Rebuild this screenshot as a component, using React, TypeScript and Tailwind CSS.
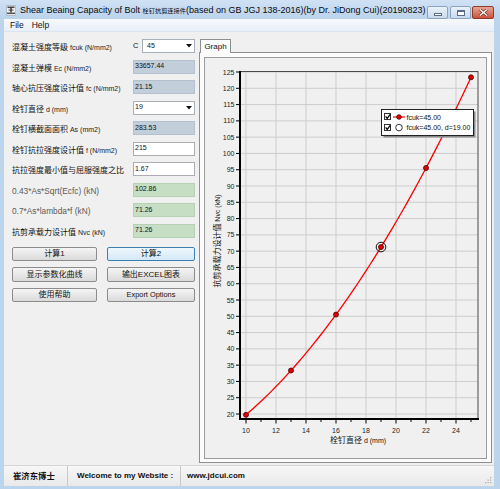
import React from "react";

const N = (d: number) => (0.7 * Math.PI * d * d / 4 * 1.67 * 215) / 1000;
const X = (d: number) => 246 + (d - 10) * 15;
const Y = (v: number) => 414 - (v - 20) * 3.257;
const FF = "'Liberation Sans','Noto Sans CJK SC',sans-serif";

function Chart() {
  const curve: string[] = [];
  for (let i = 0; i <= 60; i++) {
    const d = 10 + i * 0.25;
    curve.push(`${X(d).toFixed(2)},${Y(N(d)).toFixed(2)}`);
  }
  const yVals: number[] = [];
  for (let v = 20; v <= 125; v += 5) yVals.push(v);
  const xLabels = [10, 12, 14, 16, 18, 20, 22, 24];
  const xTicks: number[] = [];
  for (let d = 10; d <= 25; d++) xTicks.push(d);
  const marks = [10, 13, 16, 19, 22, 25];
  return (
    <svg width={281} height={400} viewBox="205 58 281 400" className="block" fontFamily={FF}>
      <rect x={205} y={58} width={281} height={400} fill="#f0f0f0" />
      {yVals.map((v) => (
        <line key={"gy" + v} x1={240} x2={478} y1={Y(v)} y2={Y(v)} stroke="#cdcdcd" strokeWidth={1} />
      ))}
      {xLabels.map((d) => (
        <line key={"gx" + d} x1={X(d)} x2={X(d)} y1={71} y2={419} stroke="#cdcdcd" strokeWidth={1} />
      ))}
      <rect x={240.5} y={71.5} width={237.5} height={347.5} fill="none" stroke="#4a4a4a" strokeWidth={1} />
      <line x1={240} x2={240} y1={71} y2={420} stroke="#000" strokeWidth={2} />
      <line x1={239} x2={479} y1={419} y2={419} stroke="#000" strokeWidth={2} />
      {yVals.map((v) => (
        <line key={"ty" + v} x1={236} x2={240} y1={Y(v)} y2={Y(v)} stroke="#000" strokeWidth={1} />
      ))}
      {xTicks.map((d) => (
        <line key={"tx" + d} x1={X(d)} x2={X(d)} y1={419} y2={d % 2 === 0 ? 423.5 : 422} stroke="#000" strokeWidth={1} />
      ))}
      {yVals.map((v) => (
        <text key={"ly" + v} x={234.5} y={Y(v) + 2.5} fontSize={7} textAnchor="end" fill="#222">
          {v}
        </text>
      ))}
      {xLabels.map((d) => (
        <text key={"lx" + d} x={X(d)} y={433} fontSize={7} textAnchor="middle" fill="#222">
          {d}
        </text>
      ))}
      <polyline points={curve.join(" ")} fill="none" stroke="#ff0000" strokeWidth={1.3} />
      {marks.map((d) => (
        <circle key={"m" + d} cx={X(d)} cy={Y(N(d))} r={2.5} fill="#e00000" stroke="#4a0000" strokeWidth={0.8} />
      ))}
      <circle cx={X(19)} cy={Y(N(19))} r={4.8} fill="none" stroke="#111" strokeWidth={1} />

      {/* legend */}
      <rect x={383.5} y={111.5} width={92} height={26} fill="#8a8a8a" />
      <rect x={381.5} y={109.5} width={92} height={26} fill="#fff" stroke="#222" strokeWidth={1} />
      <rect x={384.5} y={113.5} width={6} height={6} fill="#fff" stroke="#333" strokeWidth={1} />
      <polyline points="385.6,116.3 387.2,118.4 390.2,114.3" fill="none" stroke="#000" strokeWidth={1.2} />
      <line x1={393} x2={405} y1={117} y2={117} stroke="#ff0000" strokeWidth={1.2} />
      <circle cx={399} cy={117} r={2.3} fill="#e00000" stroke="#4a0000" strokeWidth={0.8} />
      <text x={406.5} y={119.6} fontSize={7} fill="#111">fcuk=45.00</text>
      <rect x={384.5} y={124.5} width={6} height={6} fill="#fff" stroke="#333" strokeWidth={1} />
      <polyline points="385.6,127.3 387.2,129.4 390.2,125.3" fill="none" stroke="#000" strokeWidth={1.2} />
      <circle cx={399} cy={127.6} r={3.3} fill="#fff" stroke="#222" strokeWidth={0.9} />
      <text x={406.5} y={130.2} fontSize={7} fill="#111">fcuk=45.00, d=19.00</text>

      {/* axis titles */}
      <text x={358} y={443} textAnchor="middle" fill="#111">
        <tspan fontSize={8}>栓钉直径</tspan>
        <tspan fontSize={7}> d (mm)</tspan>
      </text>
      <text transform="translate(219.5,241) rotate(-90)" textAnchor="middle" fill="#111">
        <tspan fontSize={8}>抗剪承载力设计值</tspan>
        <tspan fontSize={7}> Nvc (kN)</tspan>
      </text>
    </svg>
  );
}

function StudIcon() {
  return (
    <svg width={10} height={11} viewBox="0 0 10 11" className="mt-[5px] shrink-0">
      <rect x={0.5} y={0.5} width={9} height={10} fill="#f4f6f8" stroke="#9aa6b2" strokeWidth={0.6} />
      <rect x={1.5} y={1.5} width={7} height={1.6} fill="#444" />
      <rect x={4.2} y={3} width={1.6} height={4.5} fill="#444" />
      <rect x={2.5} y={4.6} width={5} height={1} fill="#444" />
      <rect x={1} y={7.5} width={8} height={1.6} fill="#555" />
    </svg>
  );
}

function Combo({ value, pad }: { value: string; pad: string }) {
  return (
    <div className={`h-[14px] w-full bg-white border border-[#a9afb8] flex items-center ${pad} text-[7px]`}>
      <span>{value}</span>
      <svg width={6} height={4} viewBox="0 0 6 4" className="ml-auto mr-[2px]">
        <polygon points="0,0 6,0 3,3.5" fill="#111" />
      </svg>
    </div>
  );
}

function Box({ value, tone }: { value: string; tone: "blue" | "white" | "green" }) {
  const cls =
    tone === "blue"
      ? "bg-[#c2cfdb] border-[#b4c2cf]"
      : tone === "green"
      ? "bg-[#c6dfc4] border-[#b6d0b4]"
      : "bg-white border-[#abadb3]";
  return (
    <div className={`h-[14px] w-full border ${cls} flex items-center pl-[1px] text-[7px] text-[#111]`}>
      {value}
    </div>
  );
}

function Lbl({ cn, en, gray }: { cn?: string; en?: string; gray?: boolean }) {
  return (
    <div className="w-[121px] shrink-0 whitespace-pre leading-[11px]">
      {cn ? <span className="text-[8px] text-[#111]">{cn}</span> : null}
      {en ? (
        <span className={gray ? "text-[8.3px] text-[#5a5a5a]" : "text-[7px] text-[#222]"}>{en}</span>
      ) : null}
    </div>
  );
}

function Btn({ children, active, wide }: { children: React.ReactNode; active?: boolean; wide?: boolean }) {
  return (
    <div
      className={`h-[14.5px] ${wide ? "w-[88px]" : "w-[85px]"} rounded-[2px] border flex items-center justify-center text-[8px] text-[#111] ${
        active
          ? "border-[#3c7fb1] bg-linear-to-b from-[#eef7fd] to-[#d3e9f7]"
          : "border-[#8c8c8c] bg-linear-to-b from-[#f5f5f5] to-[#dadada]"
      }`}
    >
      {children}
    </div>
  );
}

export default function App() {
  return (
    <div className="w-[500px] h-[489px] flex flex-col bg-[#bdd4ed] font-['Liberation_Sans','Noto_Sans_CJK_SC',sans-serif] text-[#111] overflow-hidden">
      {/* title bar */}
      <div className="h-[19px] shrink-0 flex items-start bg-linear-to-b from-[#d0e1f4] to-[#bbd3ec] pl-[6px] pr-[6px]">
        <StudIcon />
        <div className="ml-[4px] mt-[4px] text-[9px] leading-[12px] text-[#0a0a0a] whitespace-nowrap">
          Shear Beaing Capacity of Bolt <span className="text-[6.2px]">栓钉抗剪连接件</span>(based on GB JGJ 138-2016)(by Dr. JiDong Cui)(20190823)
        </div>
        <div className="ml-auto mt-[6px] flex items-start">
          <div className="w-[21px] h-[13px] rounded-[2px] border border-[#8aa2c0] bg-linear-to-b from-[#eaf1f9] to-[#c9d9ec] flex items-end justify-center pb-[2px]">
            <div className="w-[8px] h-[3px] bg-white border border-[#5a6c85]" />
          </div>
          <div className="ml-[2px] w-[21px] h-[13px] rounded-[2px] border border-[#8aa2c0] bg-linear-to-b from-[#eaf1f9] to-[#c9d9ec] flex items-center justify-center">
            <div className="w-[8px] h-[6px] bg-white border border-[#5a6c85] border-t-2" />
          </div>
          <div className="ml-[1px] w-[22px] h-[13px] rounded-[2px] border border-[#8e3b2c] bg-linear-to-b from-[#eaa391] to-[#c8513c] flex items-center justify-center">
            <svg width={9} height={7} viewBox="0 0 9 7">
              <path d="M1 0.5 L8 6.5 M8 0.5 L1 6.5" stroke="#5a1e14" strokeWidth={2.6} />
              <path d="M1 0.5 L8 6.5 M8 0.5 L1 6.5" stroke="#fff" strokeWidth={1.4} />
            </svg>
          </div>
        </div>
      </div>

      {/* window body */}
      <div className="flex-1 flex flex-col pl-[4px] pr-[6px] pb-[3px] min-h-0">
        {/* menu */}
        <div className="h-[13px] shrink-0 flex items-center bg-linear-to-b from-[#f6f9fd] to-[#e9eff8] border-b border-[#dbe4ef] text-[8.5px] text-[#111]">
          <span className="ml-[6px]">File</span>
          <span className="ml-[8px]">Help</span>
        </div>

        {/* client */}
        <div className="flex-1 flex bg-[#f0f0f0] min-h-0">
          {/* left panel */}
          <div className="w-[193px] shrink-0 pl-[8px] pt-[3.75px] flex flex-col">
            <div className="h-[20.5px] flex items-center">
              <Lbl cn="混凝土强度等级" en=" fcuk (N/mm2)" />
              <span className="w-[9px] text-[7.5px]">C</span>
              <div className="w-[53px]">
                <Combo value="45" pad="pl-[4px]" />
              </div>
            </div>
            <div className="h-[20.5px] flex items-center">
              <Lbl cn="混凝土弹模" en=" Ec (N/mm2)" />
              <div className="w-[62px]">
                <Box value="33657.44" tone="blue" />
              </div>
            </div>
            <div className="h-[20.5px] flex items-center">
              <Lbl cn="轴心抗压强度设计值" en=" fc (N/mm2)" />
              <div className="w-[62px]">
                <Box value="21.15" tone="blue" />
              </div>
            </div>
            <div className="h-[20.5px] flex items-center">
              <Lbl cn="栓钉直径" en=" d (mm)" />
              <div className="w-[62px]">
                <Combo value="19" pad="pl-[1px]" />
              </div>
            </div>
            <div className="h-[20.5px] flex items-center">
              <Lbl cn="栓钉横截面面积" en=" As (mm2)" />
              <div className="w-[62px]">
                <Box value="283.53" tone="blue" />
              </div>
            </div>
            <div className="h-[20.5px] flex items-center">
              <Lbl cn="栓钉抗拉强度设计值" en=" f (N/mm2)" />
              <div className="w-[62px]">
                <Box value="215" tone="white" />
              </div>
            </div>
            <div className="h-[20.5px] flex items-center">
              <Lbl cn="抗拉强度最小值与屈服强度之比" />
              <div className="w-[62px]">
                <Box value="1.67" tone="white" />
              </div>
            </div>
            <div className="h-[20.5px] flex items-center">
              <Lbl en="0.43*As*Sqrt(Ecfc) (kN)" gray />
              <div className="w-[62px]">
                <Box value="102.86" tone="green" />
              </div>
            </div>
            <div className="h-[20.5px] flex items-center">
              <Lbl en="0.7*As*lambda*f (kN)" gray />
              <div className="w-[62px]">
                <Box value="71.26" tone="green" />
              </div>
            </div>
            <div className="h-[20.5px] flex items-center">
              <Lbl cn="抗剪承载力设计值" en=" Nvc (kN)" />
              <div className="w-[62px]">
                <Box value="71.26" tone="green" />
              </div>
            </div>

            <div className="mt-[6px] flex flex-col gap-[6px]">
              <div className="flex gap-[10px]">
                <Btn>计算1</Btn>
                <Btn active wide>计算2</Btn>
              </div>
              <div className="flex gap-[10px]">
                <Btn>显示参数化曲线</Btn>
                <Btn wide>输出EXCEL图表</Btn>
              </div>
              <div className="flex gap-[10px]">
                <Btn>使用帮助</Btn>
                <Btn wide>
                  <span className="text-[7.4px]">Export Options</span>
                </Btn>
              </div>
            </div>
          </div>

          {/* right panel */}
          <div className="flex-1 flex flex-col pt-[7px] pl-[2px] pr-[2px] pb-[2px] min-w-0">
            <div className="flex">
              <div className="ml-[1px] w-[31px] h-[14px] -mb-[1px] relative z-10 bg-[#fcfcfc] border border-[#8e8f8f] border-b-0 flex items-center justify-center text-[8px] text-[#111]">
                Graph
              </div>
            </div>
            <div className="flex-1 border border-[#8e8f8f] bg-[#fcfcfc] pl-[4px] pt-[4px]">
              <div className="w-[283px] h-[402px] border border-[#9c9c9c]">
                <Chart />
              </div>
            </div>
          </div>
        </div>

        {/* status bar */}
        <div className="h-[21px] shrink-0 flex items-center bg-linear-to-b from-[#f7f7f7] to-[#e9e9e9] border-t border-[#d6d6d6] font-bold text-[8px] text-[#111]">
          <div className="w-[64px] h-full flex items-center pl-[9px] border-r border-[#c9c9c9]">
            <span className="text-[8.4px]">崔济东博士</span>
          </div>
          <div className="w-[113px] h-full flex items-center pl-[9px] border-r border-[#c9c9c9]">
            Welcome to my Website :
          </div>
          <div className="flex-1 h-full flex items-center pl-[6px]">www.jdcui.com</div>
          <svg width={8} height={8} viewBox="0 0 8 8" className="self-end mb-[2px] mr-[2px]">
            <rect x={6} y={6} width={1.2} height={1.2} fill="#aaa" />
            <rect x={3.5} y={6} width={1.2} height={1.2} fill="#aaa" />
            <rect x={6} y={3.5} width={1.2} height={1.2} fill="#aaa" />
            <rect x={1} y={6} width={1.2} height={1.2} fill="#aaa" />
            <rect x={3.5} y={3.5} width={1.2} height={1.2} fill="#aaa" />
            <rect x={6} y={1} width={1.2} height={1.2} fill="#aaa" />
          </svg>
        </div>
      </div>
    </div>
  );
}
